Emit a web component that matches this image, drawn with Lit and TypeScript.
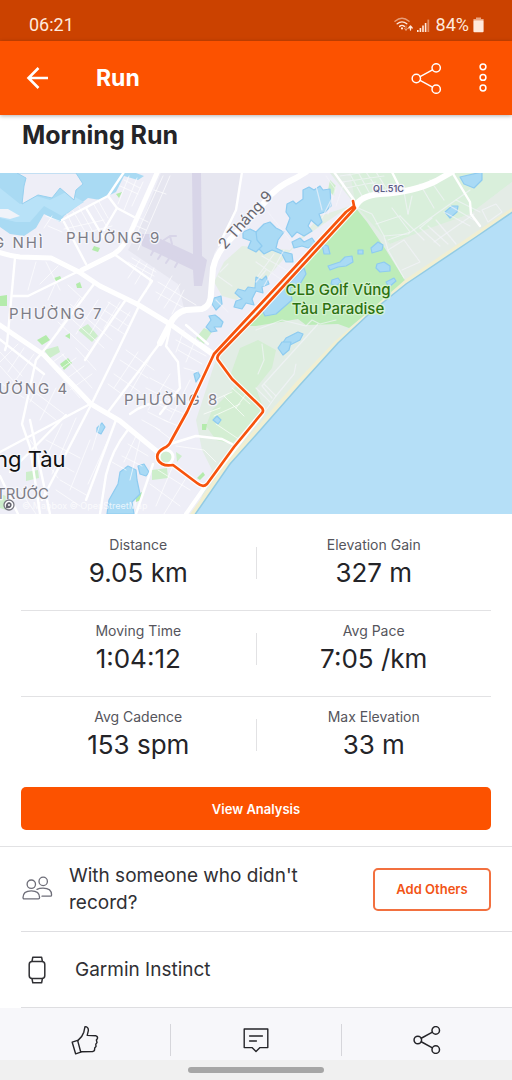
import { LitElement, html, css, svg } from "lit";
import { customElement, property } from "lit/decorators.js";

interface Stat {
  label: string;
  value: string;
}

const STAT_ROWS: Stat[][] = [
  [
    { label: "Distance", value: "9.05 km" },
    { label: "Elevation Gain", value: "327 m" },
  ],
  [
    { label: "Moving Time", value: "1:04:12" },
    { label: "Avg Pace", value: "7:05 /km" },
  ],
  [
    { label: "Avg Cadence", value: "153 spm" },
    { label: "Max Elevation", value: "33 m" },
  ],
];

/* Main streets, drawn wide. */
const MAJOR_ROADS = [
  "M-2 252 Q10 256 20 257 L51 258 L79 272 L100 286 L137 304 L170 324 L212 354",
  "M157 173 L133 227 Q124 248 114 254 L82 270",
  "M-2 324 L44 355 L91 404 L120 421 L165 458",
];
const WIDE_ROADS = [
  "M160 343 L170 324 Q176 312 186 310 L202 309 Q211 306 211 293 L213 268 Q216 254 226 244 L266 201 Q274 188 296 178 L306 172",
  "M356 206 Q360 196 380 194 Q414 192 436 181 L452 172",
];
const MEDIUM_ROADS = [
  "M15 258 L7 344 L5 350", "M-2 338 L44 374", "M13 296 L28 296 L79 271",
  "M94 284 L49 344 L36 360 L22 424 L30 447 L40 514", "M114 254 L152 281 L137 304",
  "M160 343 L108 412", "M127 298 L98 340 L85 360", "M139 306 L118 350 L92 403 L42 500",
  "M92 403 L0 452", "M116 420 L86 500", "M127 431 Q112 450 106 475 L100 514",
  "M130 414 Q146 402 163 402", "M170 444 L196 436 L222 439 L232 444", "M153 464 L136 514",
  "M171 324 L166 346 L178 362 L180 388 L160 414", "M242 172 L236 210 L219 245",
  "M334 172 L354 200", "M452 172 L470 202 L471 214 L480 226", "M392 172 L401 190",
  "M64 222 L86 264", "M86 208 L105 240", "M62 220 L108 196 L124 172", "M108 196 L117 208 L134 217",
  "M117 208 L104 230", "M208 344 L186 325", "M66 415 L10 472", "M30 420 L50 514", "M0 476 L18 514",
];
const MINOR_ROADS = [
  "M67 214 L78 237 M73 211 L87 235 M79 207 L93 232 M93 203 L111 234 M98 200 L108 218",
  "M64 229 L104 220 M72 236 L112 226 M46 216 L62 222 M48 226 L62 232 M52 216 L44 228",
  "M124 180 L140 188 M120 186 L138 194 M129 176 L118 204 M137 178 L124 210 M143 182 L132 206",
  "M170 176 L138 250 M163 176 L134 240 M136 216 L148 222 M132 224 L146 230 M154 190 L166 194",
  "M128 262 L154 276 M132 258 L156 272 M140 260 L128 278 M147 264 L135 284 M154 268 L146 292",
  "M158 282 L196 305 M156 292 L184 308 M172 276 L158 300 M180 284 L164 308 M184 290 L172 314",
  "M36 262 L28 290 M46 262 L60 290 M58 266 L40 284 M68 285 L84 300 M56 282 L48 300",
  "M70 304 L112 340 M64 312 L104 348 M58 322 L90 352 M80 298 L58 330 M98 300 L76 334 M110 302 L90 334",
  "M108 302 L130 316 M104 310 L128 326 M100 318 L124 334 M120 302 L104 328 M130 312 L118 330",
  "M0 352 L22 376 M0 366 L16 384 M18 344 L0 362 M24 348 L8 372 M34 354 L10 388",
  "M50 364 L64 354 M56 372 L76 358 M62 382 L84 366 M70 390 L92 374 M50 364 L80 398 M62 354 L92 388 M76 348 L96 370",
  "M24 384 L64 414 M28 398 L56 420 M44 374 L30 402 M56 388 L40 420 M2 384 L24 398",
  "M46 440 L80 458 M42 454 L74 472 M62 424 L40 470 M76 418 L52 474 M90 440 L70 490 M30 440 L58 478",
  "M60 480 L88 496 M56 490 L80 506 M100 424 L92 450 M108 440 L88 484 M20 490 L36 514",
  "M126 350 L154 370 M120 360 L148 378 M114 374 L140 392 M138 352 L114 388 M150 358 L128 396 M108 384 L130 400",
  "M146 388 L170 400 M150 378 L176 392 M154 402 L172 412 M148 412 L168 422 M142 420 L160 430 M170 374 L148 410",
  "M176 340 L206 356 M178 350 L202 364 M184 330 L176 352 M196 338 L186 362 M184 368 L198 372",
  "M176 396 L188 402 M170 408 L184 414 M164 420 L178 426 M156 428 L172 440 M190 380 L170 420",
  "M128 444 L148 456 M122 456 L142 466 M136 436 L124 462 M112 462 L126 470 M140 440 L130 480",
  "M158 470 L190 490 M150 484 L180 506 M172 468 L156 506 M186 478 L164 514 M176 446 L204 450 L216 462",
  "M210 402 L232 392 M214 416 L240 404 M216 424 L240 440 M224 396 L244 416 M232 388 L250 404 M238 384 L246 394 L236 408 M204 414 L220 408",
];
const COAST_ROADS = [
  "M358 208 L372 214 L384 236 L388 250 L404 278", "M376 224 L400 216 M392 208 L410 232 L388 240",
  "M384 236 L408 234 L436 214 L470 190", "M408 214 L412 196 M400 216 L424 240 M420 228 L440 246",
  "M428 226 L448 244 M436 220 L456 244 M444 212 L470 226 M450 206 L474 220 M456 200 L480 212",
  "M388 250 L404 240 M404 240 L420 262 L402 270 M420 228 L432 218 M482 210 L496 204 L502 212 L488 222Z",
  "M474 214 L434 242 M430 180 L444 200 M420 184 L434 208 M404 192 L408 214",
  "M340 176 L366 172 M342 182 L384 176 M346 188 L376 182 M350 174 L362 196 M358 172 L370 194 M366 172 L378 190 M376 172 L386 188",
  "M344 182 L336 206 M336 186 L328 214 M326 176 L336 190 L322 218 M316 186 L322 210 M268 212 L290 240",
  "M266 270 L256 282 M256 262 L282 280 M262 256 L286 270 M274 254 L258 276 M284 250 L264 286",
  "M256 330 L282 320 L306 326 L312 320 L320 324 L336 320 M318 324 L262 386 L272 398 M264 384 L276 396 L266 410",
  "M256 388 L270 402 M262 344 L264 360 L258 374 M296 364 L294 374 L276 396 M218 276 L232 286 M216 300 L228 312 M228 264 L220 272",
];

const PONDS = [
  "M287 204 L293 201 L296 204 L303 199 L303 190 L309 187 L314 190 L320 186 L323 190 L330 189 L331 206 L325 212 L319 214 L322 222 L318 226 L311 220 L308 226 L312 231 L304 236 L297 232 L292 237 L286 229 L290 218 L286 212Z",
  "M256 232 L264 224 L270 222 L276 228 L284 232 L278 240 L276 248 L284 252 L292 254 L293 262 L286 262 L282 254 L272 250 L264 254 L256 246Z",
  "M292 242 L300 238 L304 242 L312 238 L316 244 L308 248 L302 246 L294 248Z",
  "M322 244 L328 246 L330 254 L324 254Z", "M328 266 L334 264 L340 262 L345 257 L352 256 L353 262 L346 266 L338 267 L330 270Z",
  "M371 248 L378 242 L383 245 L382 250 L372 253Z", "M377 264 L384 262 L390 266 L390 271 L380 272 L376 268Z",
  "M358 250 L363 250 L363 254 L358 254Z", "M332 280 L338 278 L341 282 L336 286 L331 284Z",
  "M386 282 L394 278 L396 281 L389 287Z",
  "M256 277 L262 280 L266 276 L269 284 L262 287 L263 293 L256 291 L252 299 L254 305 L246 303 L242 309 L234 307 L236 301 L242 299 L235 293 L238 289 L245 291 L248 287 L255 288Z",
  "M304 268 L306 274 L300 284 L290 288 L292 300 L276 314 L265 316 L262 310 L280 292Z",
  "M214 298 L221 296 L222 304 L216 310 L212 304Z", "M206 327 L211 320 L209 316 L215 315 L219 318 L223 322 L221 327 L214 327 L217 331 L211 332Z",
  "M243 232 L250 229 L256 232 L257 240 L262 246 L256 252 L248 248 L251 241 L243 238Z", "M460 177 L482 172 L482 180 L474 188 L464 184Z",
  "M445 212 L452 206 L458 206 L457 212 L450 218Z", "M286 338 L298 332 L303 334 L300 340 L288 346 L282 344Z",
  "M278 348 L282 342 L291 342 L289 350 L283 355Z", "M194 374 L198 372 L200 376 L196 382Z",
  "M213 420 L217 416 L221 420 L218 424Z", "M97 428 L102 423 L105 427 L101 434 L97 432Z",
  "M138 466 L144 464 L149 472 L146 476 L140 474Z",
  "M107 514 L109 500 L118 484 L120 472 L128 466 L136 470 L137 480 L140 494 L132 502 L134 514Z",
];

const GREENS = [
  "M0 296 L7 295 L7 306 L0 306Z", "M94 246 L100 248 L98 252 L92 250Z", "M54 278 L60 276 L62 280 L56 282Z",
  "M76 284 L80 282 L82 288 L77 288Z", "M37 340 L46 335 L50 340 L42 345Z", "M65 336 L70 333 L70 339Z",
  "M116 194 L122 192 L119 198Z", "M60 364 L68 358 L72 363 L64 370Z", "M202 424 L207 424 L206 430 L202 430Z",
  "M136 496 L142 492 L141 500 L136 502Z", "M197 478 L203 472 L205 475 L200 480Z",
];
const SOFT_GREENS = [
  "M26 472 L38 470 L39 478 L26 481Z", "M78 330 L88 324 L98 336 L92 342Z", "M152 470 L167 468 L168 478 L152 480Z",
  "M196 338 L204 328 L212 332 L204 344Z", "M176 452 L182 456 L177 462Z", "M0 494 L6 496 L6 510 L0 508Z",
  "M330 180 L336 186 L334 196 L328 190Z", "M44 350 L58 346 L60 352 L50 358Z",
];

const ROUTE =
  "M353 201 L354 206 L346 212 L256 309 L214 354 L187 412 L171 441 Q169 446 164 448 Q155 453 158 460 Q162 467 173 465 L197 483 Q203 488 207 484 L234 447 L262 413 Q264 411 262 408 L256 402 L232 379 L218 360 Q216 357 220 353 L257 315 L355 208 L354 206";

@customElement("route-map")
export class RouteMap extends LitElement {
  static styles = css`
    :host {
      display: block;
    }
    .map {
      display: block;
      width: 100%;
      height: auto;
      font-family: Inter, "Liberation Sans", sans-serif;
    }
    .line {
      fill: none;
      stroke: #fff;
      stroke-linejoin: round;
      stroke-linecap: round;
    }
    .major { stroke-width: 5; }
    .wide { stroke-width: 6; }
    .medium { stroke-width: 2.4; }
    .minor { stroke-width: 0.9; opacity: 0.75; }
    .coast { stroke-width: 1.2; opacity: 0.65; stroke: #f4f4fb; }
    .pond { fill: #a9daf5; stroke: #8ecbf0; stroke-width: 1.2; stroke-linejoin: round; }
    .green { fill: #b4ebac; }
    .soft { fill: #cdeecb; }
    .casing { stroke: #fff; stroke-width: 5; opacity: 0.9; }
    .route { stroke: #f7530d; stroke-width: 2.7; }
    .halo {
      paint-order: stroke;
      stroke: #f6f6fb;
      stroke-width: 2.5px;
      stroke-linejoin: round;
    }
    .ward { font-size: 15px; letter-spacing: 2px; fill: #7d7d86; }
    .near { letter-spacing: 0; }
    .street { font-size: 15px; fill: #66666f; }
    .city { font-size: 22px; fill: #111; }
    .golf {
      font-size: 15px;
      font-weight: 500;
      fill: #2c7110;
      text-anchor: middle;
      stroke: #d5f2d0;
    }
    .shield { font-size: 9px; font-weight: 600; fill: #5c5c85; }
    .credit { font-size: 9px; fill: #fff; opacity: 0.75; }
  `;

  render() {
    const lines = (paths: string[], kind: string) =>
      paths.map((d) => svg`<path class="line ${kind}" d=${d}></path>`);
    const areas = (paths: string[], kind: string) =>
      paths.map((d) => svg`<path class=${kind} d=${d}></path>`);
    return html`
      <svg class="map" viewBox="0 173 512 341" role="img" aria-label="Route map">
        <rect x="0" y="173" width="512" height="341" fill="#eeeef7"></rect>
        <path fill="#e6e6f0" d="M161 173 H242 L236 210 L214 254 L211 300 L203 308 L184 308 L178 284 L128 250 L138 232Z"></path>
        <path fill="#a9daf3" d="M0 173 H136 L144 176 L138 180 L124 176 L116 192 L100 200 L88 198 L64 216 L60 222 L44 214 L36 228 L24 236 L10 234 L0 227Z"></path>
        <path fill="#b8e2f8" d="M0 188 L20 204 L36 196 L50 200 L66 192 L84 202 L62 216 L44 206 L30 222 L16 222 L0 218Z"></path>
        <path fill="#eeeef7" stroke="#98d0ef" d="M17 173 L26 178 L24 186 L22 204 L38 195 L52 198 L60 188 L74 200 L76 190 L83 184 L76 173Z"></path>
        <path fill="#f0f3f9" d="M0 209 L8 209 L20 216 L10 219 L0 217Z"></path>
        <path fill="#e2ede5" d="M330 173 L356 206 L240 330 L217 356 L196 420 L202 450 L212 470 L195 514 L512 250 V173Z"></path>
        <path fill="#d9efdb" d="M350 173 H512 V182 L470 214 L390 244 L356 206Z"></path>
        <path fill="#e4ece6" d="M390 244 L430 228 L470 214 L512 182 V220 L406 290Z"></path>
        <path fill="#e3eee3" d="M242 246 L224 262 L214 282 L222 296 L236 300 L262 284 L300 240 L350 206 L320 216 L290 250Z"></path>
        <path fill="#bdecb9" d="M355 207 L367 222 L386 250 L406 282 L378 304 L349 328 L338 324 L306 325 L298 319 L256 326 L240 326Z"></path>
        <path fill="#d4eed3" d="M240 348 L258 340 L276 350 L272 368 L256 388 L262 404 L244 392 L230 376Z M212 410 L236 386 L262 410 L232 444 L216 440 L206 426Z"></path>
        <path fill="#f1efd2" d="M512 208 L406 279 L334 342 L296 382 L228 460 L190 514 H512Z"></path>
        <path fill="#b5dff7" stroke="#93cbe4" stroke-width="1.5" d="M514 211 L476 237 L406 284 L370 313 L338 343 L299 386 L256 435 L230 464 L194 516 H514Z"></path>

        <path fill="#d8d5e8" d="M192 173 H201 L202 256 L207 260 L202 286 H194 L193 270 L142 246 L140 234 L150 234 L193 254Z"></path>
        <path class="line" style="stroke:#d8d5e8;stroke-width:2" d="M156 246 L151 255 M164 250 L158 259 M172 254 L166 263 M180 258 L175 267 M148 244 L192 266 M164 240 L170 236 L176 236 M170 236 L172 244"></path>

        ${areas(SOFT_GREENS, "soft")} ${areas(GREENS, "green")}
        ${areas(PONDS, "pond")}
        ${lines(MINOR_ROADS, "minor")} ${lines(COAST_ROADS, "coast")}
        ${lines(MEDIUM_ROADS, "medium")} ${lines(MAJOR_ROADS, "major")}
        ${lines(WIDE_ROADS, "wide")}
        <path class="line" style="stroke-width:4" d="M207 484 L186 514 M207 484 L262 414 M217 356 L200 344"></path>
        <circle cx="166" cy="457" r="7" fill="#d2eed2" stroke="#fff" stroke-width="3"></circle>

        <text class="ward halo" x="66" y="243">PHƯỜNG 9</text>
        <text class="ward halo" x="-7" y="248">G NHÌ</text>
        <text class="ward halo" x="9" y="319">PHƯỜNG 7</text>
        <text class="ward halo" x="-15" y="394">HƯỜNG 4</text>
        <text class="ward halo" x="124" y="405">PHƯỜNG 8</text>
        <text class="ward near halo" x="-4" y="499">TRƯỚC</text>
        <text class="street halo" transform="translate(225 250) rotate(-48)">2 Tháng 9</text>
        <text class="city halo" x="-5" y="467">ng Tàu</text>
        <text class="shield halo" x="373" y="192">QL.51C</text>

        <path class="line casing" d=${ROUTE}></path>
        <path class="line route" d=${ROUTE}></path>

        <text class="golf halo" x="338" y="295">CLB Golf Vũng</text>
        <text class="golf halo" x="338" y="314">Tàu Paradise</text>
        <text class="credit" x="22" y="509">© Mapbox © OpenStreetMap</text>
        <circle cx="9" cy="505" r="5" fill="#fff" stroke="#777781" stroke-width="1.3"></circle>
        <path fill="#666670" d="M6 508 Q5 503 9 502 Q13 503 11 507 Q9 509 6 508Z"></path>
        <circle cx="9" cy="505" r="1" fill="#fff"></circle>
      </svg>
    `;
  }
}

@customElement("stat-cell")
export class StatCell extends LitElement {
  @property() label = "";
  @property() value = "";

  static styles = css`
    :host {
      display: block;
      text-align: center;
    }
    .label {
      font-size: 14px;
      line-height: 20px;
      color: #55555c;
    }
    .value {
      font-size: 26px;
      line-height: 36px;
      color: #242428;
    }
  `;

  render() {
    return html`
      <div class="label">${this.label}</div>
      <div class="value">${this.value}</div>
    `;
  }
}

@customElement("app-root")
export class AppRoot extends LitElement {
  static styles = css`
    :host {
      display: flex;
      flex-direction: column;
      min-height: 100vh;
      background: #fff;
      color: #242428;
      font-family: Inter, "Liberation Sans", sans-serif;
    }
    * {
      box-sizing: border-box;
    }
    svg {
      display: block;
      flex: none;
    }
    button {
      font: inherit;
      color: inherit;
      margin: 0;
      padding: 0;
      border: 0;
      background: none;
      cursor: pointer;
    }
    .stroke {
      fill: none;
      stroke: currentColor;
      stroke-linejoin: round;
      stroke-linecap: round;
    }
    .status {
      display: flex;
      align-items: center;
      height: 41px;
      padding: 9px 28px 0 29px;
      background: #cb4200;
      color: #ffe9dc;
      font-family: Roboto, sans-serif;
      font-size: 18px;
      line-height: 24px;
    }
    .indicators {
      display: flex;
      align-items: center;
      gap: 4px;
      margin-left: auto;
    }
    .toolbar {
      position: relative;
      display: flex;
      align-items: center;
      height: 74px;
      padding: 0 16px 0 22px;
      background: #fc5200;
      color: #fff;
      box-shadow: 0 1px 4px rgba(0, 0, 0, 0.3);
    }
    .screen {
      margin: 0 auto 0 42px;
      font-size: 23px;
      font-weight: 700;
      line-height: 32px;
    }
    .tools {
      display: flex;
      align-items: center;
      gap: 28px;
    }
    .title {
      margin: 0;
      padding: 4px 22px 22px;
      font-size: 25px;
      font-weight: 700;
      line-height: 32px;
    }
    .stats {
      padding: 11px 21px 0;
    }
    .row {
      display: grid;
      grid-template-columns: 1fr 1px 1fr;
      align-items: center;
      padding: 10px 0 19px;
      border-bottom: 1px solid #e2e2e4;
    }
    .row:last-child {
      border-bottom: 0;
    }
    .divider {
      width: 1px;
      height: 32px;
      background: #e2e2e4;
    }
    .action {
      display: flex;
      padding: 5px 21px 16px;
      border-bottom: 1px solid #e2e2e4;
    }
    .primary {
      flex: 1;
      height: 43px;
      border-radius: 5px;
      background: #fc5200;
      color: #fff;
      font-size: 13px;
      font-weight: 600;
    }
    .item {
      display: flex;
      align-items: center;
      margin-left: 21px;
      padding-right: 21px;
      border-bottom: 1px solid #dedee1;
      font-size: 19px;
      line-height: 27px;
    }
    .friends {
      gap: 16px;
      min-height: 85px;
      color: #303034;
    }
    .device {
      gap: 22px;
      min-height: 76px;
      color: #303034;
    }
    .prompt {
      flex: 1;
      margin: 0;
      padding-right: 40px;
    }
    .outline {
      width: 118px;
      height: 43px;
      border: 2px solid #f2703f;
      border-radius: 5px;
      color: #f25416;
      font-size: 13px;
      font-weight: 600;
    }
    .soft {
      color: #6d6d78;
    }
    .bar {
      display: grid;
      grid-template-columns: 1fr 1px 1fr 1px 1fr;
      align-items: center;
      height: 52px;
      margin-top: auto;
      padding-top: 11px;
      background: #f7f7fa;
    }
    .tab {
      display: flex;
      justify-content: center;
    }
    .bar .divider {
      background: #d6d6db;
    }
    .gesture {
      display: flex;
      align-items: center;
      justify-content: center;
      height: 20px;
      background: #f0f0f0;
    }
    .handle {
      width: 136px;
      height: 6px;
      border-radius: 3px;
      background: #a6a6a6;
    }
  `;

  private shareIcon(size: number, weight: number) {
    return html`
      <svg class="stroke" width=${size} height=${size} viewBox="0 0 32 32" stroke-width=${weight} aria-hidden="true">
        <circle cx="5.5" cy="16" r="4.3"></circle>
        <circle cx="26" cy="5" r="4.3"></circle>
        <circle cx="26" cy="27" r="4.3"></circle>
        <path d="M9.4 14 L22.2 7.1 M9.4 18 L22.2 24.9"></path>
      </svg>
    `;
  }

  render() {
    return html`
      <div class="status">
        <span>06:21</span>
        <div class="indicators">
          <svg width="38" height="16" viewBox="0 0 38 16" aria-hidden="true">
            <g class="stroke" stroke-width="1.4">
              <path d="M1 4.2 Q8 -1.6 15 4.2" opacity="0.55"></path>
              <path d="M3.2 6.8 Q8 3 12.8 6.8"></path>
              <path d="M5.6 9.4 Q8 7.4 10.4 9.4"></path>
            </g>
            <circle cx="8" cy="11.4" r="1.1" fill="currentColor"></circle>
            <path d="M12 9 V13 M10.5 11.5 L12 13.4 L13.5 11.5" class="stroke" opacity="0.5"></path>
            <path d="M16.5 13 V9.5 M14.8 11 L16.5 9 L18.2 11" class="stroke" stroke-width="1.3"></path>
            <path fill="currentColor" d="M23 13h1.6v2H23z M25.6 11h1.6v4h-1.6z M28.2 8.6h1.6V15h-1.6z M30.8 6h1.6v9h-1.6z"></path>
            <path fill="currentColor" opacity="0.45" d="M33.4 2.6H35.2V15h-1.8z"></path>
          </svg>
          <span>84%</span>
          <svg width="11" height="16" viewBox="0 0 11 16" aria-hidden="true">
            <path fill="currentColor" opacity="0.6" d="M3 0.5h5v1.6h2.6V4H0.4V2.1H3z"></path>
            <rect x="0.4" y="3.6" width="10.2" height="11.6" rx="1" fill="currentColor"></rect>
          </svg>
        </div>
      </div>

      <header class="toolbar">
        <button aria-label="Back">
          <svg width="32" height="32" viewBox="0 0 32 32" aria-hidden="true">
            <path fill="none" stroke="currentColor" stroke-width="2.6" d="M26 16 H7 M16.5 6 L6.5 16 L16.5 26"></path>
          </svg>
        </button>
        <div class="screen">Run</div>
        <div class="tools">
          <button aria-label="Share">${this.shareIcon(31, 1.5)}</button>
          <button aria-label="More options">
            <svg class="stroke" width="26" height="32" viewBox="0 0 26 32" stroke-width="1.5" aria-hidden="true">
              <circle cx="13" cy="4.8" r="2.9"></circle>
              <circle cx="13" cy="15.4" r="2.9"></circle>
              <circle cx="13" cy="26" r="2.9"></circle>
            </svg>
          </button>
        </div>
      </header>

      <h1 class="title">Morning Run</h1>
      <route-map></route-map>

      <section class="stats">
        ${STAT_ROWS.map(
          ([left, right]) => html`
            <div class="row">
              <stat-cell label=${left.label} value=${left.value}></stat-cell>
              <div class="divider"></div>
              <stat-cell label=${right.label} value=${right.value}></stat-cell>
            </div>
          `
        )}
      </section>

      <div class="action">
        <button class="primary">View Analysis</button>
      </div>

      <div class="item friends">
        <svg class="stroke soft" width="32" height="28" viewBox="0 0 32 28" stroke-width="1.3" aria-hidden="true">
          <circle cx="10.3" cy="9.2" r="4.2"></circle>
          <circle cx="22.2" cy="6.4" r="4.2"></circle>
          <path d="M2 22.6 Q2 15.9 10.3 15.9 Q18.6 15.9 18.6 22.6 Q18.6 23.9 17.4 23.9 H3.2 Q2 23.9 2 22.6Z"></path>
          <path d="M16 14.4 Q18.2 13.2 22 13.2 Q30.6 13.2 30.6 20 Q30.6 21.2 29.4 21.2 H21"></path>
        </svg>
        <p class="prompt">With someone who didn't record?</p>
        <button class="outline">Add Others</button>
      </div>

      <div class="item device">
        <svg class="stroke" width="32" height="30" viewBox="0 0 32 30" stroke-width="1.5" aria-hidden="true">
          <rect x="8.2" y="6.5" width="15.6" height="17" rx="3"></rect>
          <path d="M11 6.3 L11.8 2.2 H20.6 L21.4 6.3 M11 23.7 L11.8 27.8 H20.6 L21.4 23.7"></path>
        </svg>
        <span>Garmin Instinct</span>
      </div>

      <nav class="bar">
        <button class="tab" aria-label="Give kudos">
          <svg class="stroke" width="28" height="30" viewBox="0 0 28 30" stroke-width="1.4" aria-hidden="true">
            <path d="M1.2 17.2 L6.6 15.4 L9.8 27.2 L4.6 28.8Z"></path>
            <path d="M6.8 15.6 Q11.6 11.4 12.8 7.2 L14 1.6 Q17.4 1.6 17.4 5.4 L16.2 10.4 L25 10.8 Q27 11.4 26.4 13.6 L25.4 15 L26 17.6 L24.8 19.2 L25 21.6 L23.8 22.8 L23.4 25.6 L21.6 26.6 L9.8 26.8"></path>
          </svg>
        </button>
        <div class="divider"></div>
        <button class="tab" aria-label="Comments">
          <svg class="stroke" width="28" height="28" viewBox="0 0 28 28" stroke-width="1.4" aria-hidden="true">
            <path d="M2.2 3 H25.8 V21.6 H18 L14 25.6 L10 21.6 H2.2Z"></path>
            <path d="M7.6 10 H20.4 M7.6 15 H14.4"></path>
          </svg>
        </button>
        <div class="divider"></div>
        <button class="tab" aria-label="Share activity">${this.shareIcon(28, 1.7)}</button>
      </nav>
      <div class="gesture"><div class="handle"></div></div>
    `;
  }
}
